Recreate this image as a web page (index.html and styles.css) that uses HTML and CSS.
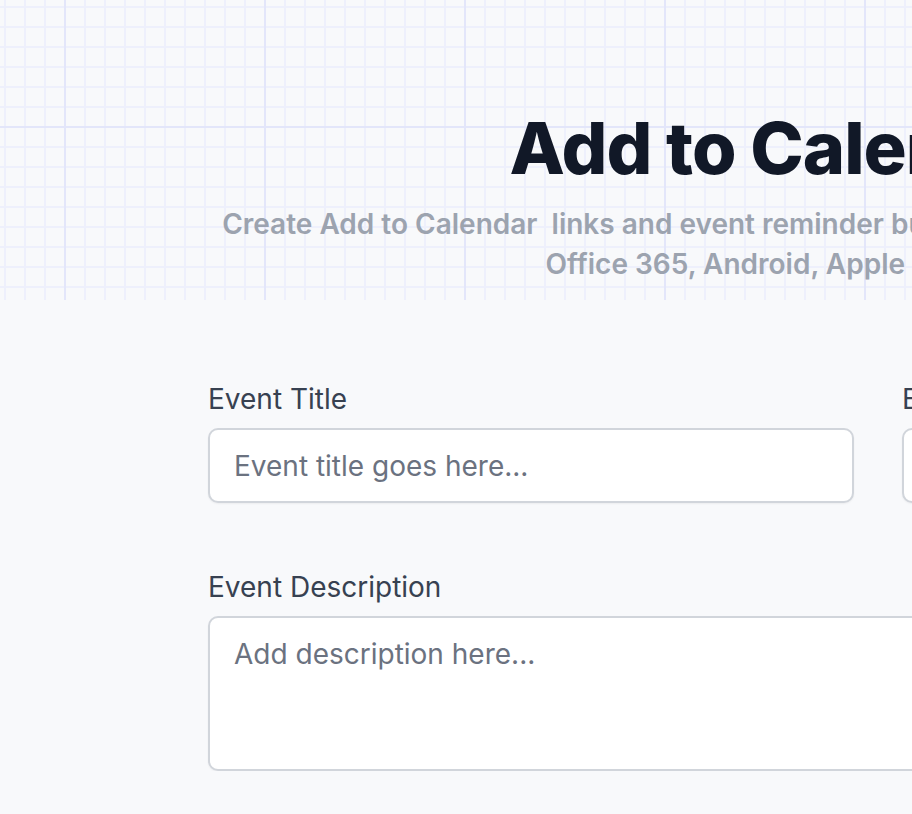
FILE: index.html
```html
<!DOCTYPE html>
<html lang="en">
<head>
<meta charset="utf-8">
<title>Add to Calendar</title>
<link rel="stylesheet" href="styles.css">
</head>
<body>
<div class="page">
  <header class="hero">
    <div class="hero-inner">
      <h1 class="hero-title">Add to Calendar Links</h1>
      <p class="hero-sub">Create Add to Calendar&nbsp; links and event reminder buttons for Google Calendar, Outlook, Yahoo,<br>Office 365, Android, Apple Calendar and more.</p>
    </div>
  </header>
  <main class="form">
    <div class="form-row">
      <div class="field">
        <label class="field-label" for="title">Event Title</label>
        <input class="field-input" id="title" type="text" placeholder="Event title goes here...">
      </div>
      <div class="field">
        <label class="field-label" for="location">Event Location</label>
        <input class="field-input" id="location" type="text" placeholder="Event location goes here...">
      </div>
    </div>
    <div class="field">
      <label class="field-label" for="desc">Event Description</label>
      <textarea class="field-input field-textarea" id="desc" placeholder="Add description here..."></textarea>
    </div>
  </main>
</div>
</body>
</html>
```

FILE: styles.css
```css
html, body {
  margin: 0;
  padding: 0;
  overflow: hidden;
  background: #f8f9fb;
  font-family: Inter, "Noto Sans", sans-serif;
}

.page {
  width: 1756px;
}

.hero {
  height: 300px;
  box-sizing: border-box;
  padding-top: 100px;
  background-color: #f8f9fb;
  background-image:
    linear-gradient(to right, #e3e6fa 2px, transparent 2px),
    linear-gradient(to bottom, #e3e6fa 2px, transparent 2px),
    linear-gradient(to right, #eef0fc 2px, transparent 2px),
    linear-gradient(to bottom, #eef0fc 2px, transparent 2px);
  background-size: 200px 200px, 200px 200px, 20px 20px, 20px 20px;
  background-position: 64px 126px, 64px 126px, 4px 6px, 4px 6px;
}

.hero-inner {
  text-align: center;
}

.hero-title {
  margin: 0;
  padding-left: 20px;
  font-size: 72px;
  line-height: 96px;
  font-weight: 800;
  color: #111827;
  letter-spacing: -1px;
}

.hero-sub {
  margin: 8px 0 0;
  padding-right: 33px;
  font-size: 28px;
  line-height: 40px;
  font-weight: 600;
  color: #9ca3af;
}

.form {
  padding: 80px 208px 0;
  display: flex;
  flex-direction: column;
  gap: 65px;
}

.form-row {
  display: grid;
  grid-template-columns: 1fr 1fr;
  gap: 48px;
}

.field {
  display: flex;
  flex-direction: column;
  gap: 10px;
}

.field-label {
  font-size: 28px;
  line-height: 38px;
  font-weight: 400;
  color: #374151;
}

.field-input {
  box-sizing: border-box;
  height: 75px;
  padding: 0 24px;
  border: 2px solid #d1d5db;
  border-radius: 10px;
  background: #ffffff;
  font-family: inherit;
  font-size: 28px;
  color: #111827;
  box-shadow: 0 1px 2px rgba(0, 0, 0, 0.05);
  outline: none;
}

.field-input::placeholder {
  color: #6b7280;
}

.field-textarea {
  height: 155px;
  padding: 16px 24px;
  line-height: 40px;
  resize: none;
}
```
